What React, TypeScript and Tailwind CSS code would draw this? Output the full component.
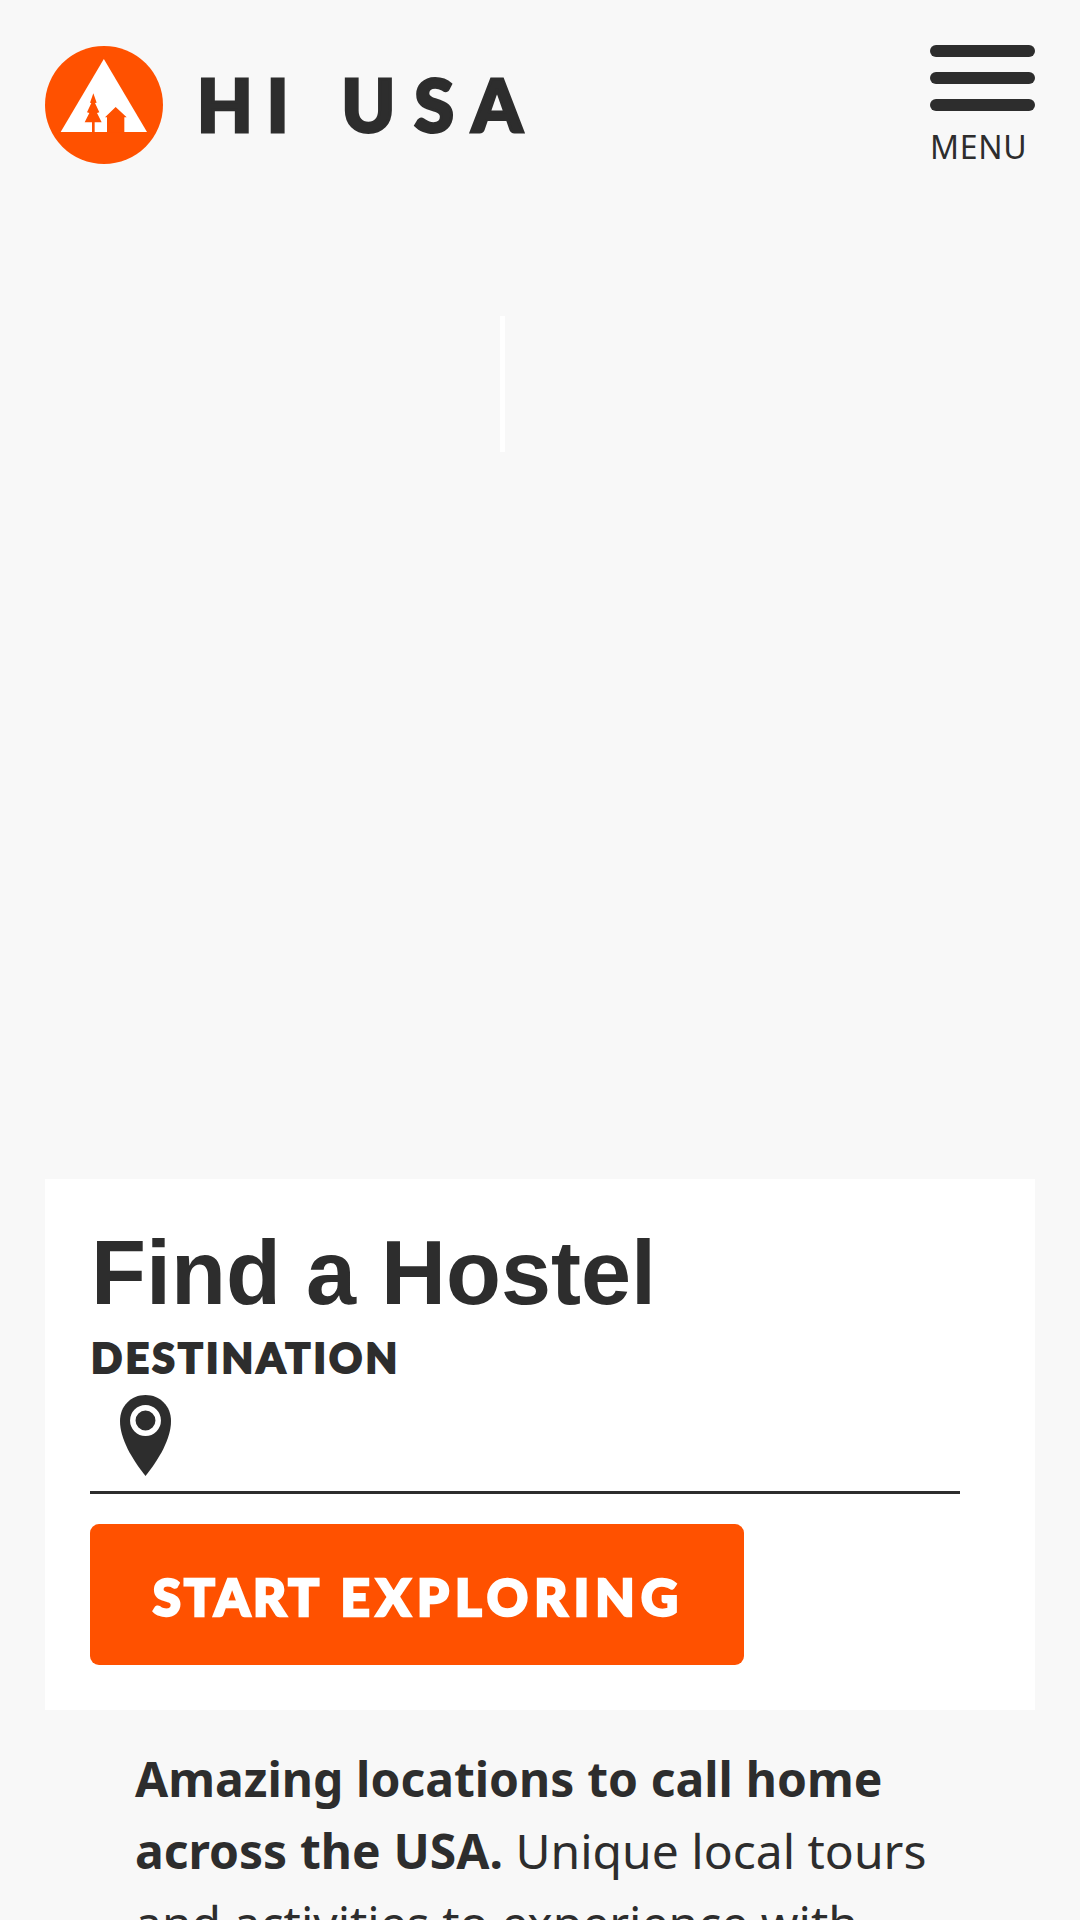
import React from 'react';

const Logo: React.FC = () => (
  <svg viewBox="45 48 354 354" className="h-[118px] w-[118px] shrink-0" aria-hidden="true">
    <circle cx="222" cy="225" r="177" fill="#ff5100" />
    <path d="M221.500 87L351 306H92Z" fill="#fff" />
    {/* Tree */}
    <path
      d="M190 190L200 218L195 219L208 247L201 249L215 277L194 277V307H186V277L164 277L178 249L171 247L184 219L180 218Z"
      fill="#ff5100"
    />
    {/* House */}
    <path d="M257 231L290 262H283V307H231V262H225Z" fill="#ff5100" />
  </svg>
);

const PinIcon: React.FC = () => (
  <svg viewBox="0 0 51 81" className="h-[81px] w-[51px]" aria-hidden="true">
    <path d="M25.500 0C11 0 0 11 0 26C0 44 12 64 25.500 81C39 64 51 44 51 26C51 11 40 0 25.500 0Z" fill="#2d2d2d" />
    <circle cx="25.500" cy="25.500" r="12.700" fill="#2d2d2d" stroke="#fff" strokeWidth="5.500" />
  </svg>
);

const Header: React.FC = () => (
  <header className="flex items-start justify-between px-[45px] pt-[45px]">
    <a href="#" className="flex items-center pt-px">
      <Logo />
      <span className="ml-[34px] pb-[2px] font-['Lato',sans-serif] text-[72px] leading-[114px] font-black tracking-[14px] [word-spacing:8px] whitespace-pre [-webkit-text-stroke:3px_#2d2d2d]">
        HI <span className="tracking-[19px]">USA</span>
      </span>
    </a>

    <button className="flex w-[105px] flex-col items-start" aria-label="Open menu">
      <span className="flex w-full flex-col gap-[15px]">
        {[0, 1, 2].map((bar) => (
          <span key={bar} className="h-3 w-full rounded-full bg-[#2d2d2d]" />
        ))}
      </span>
      <span className="mt-[14px] font-['Noto_Sans',sans-serif] text-[32px] leading-[44px] tracking-[0.700px]">MENU</span>
    </button>
  </header>
);

const HostelSearch: React.FC = () => (
  <section className="mx-[45px] h-[531px] bg-white px-[45px] pt-[45px]">
    <h1 className="pl-px font-['Liberation_Sans',sans-serif] text-[90px] leading-[99px] font-bold">Find a Hostel</h1>
    <label className="block h-[72px] pt-[5px] pl-px font-['Lato',sans-serif] text-[41px] leading-[60px] font-black tracking-[3.200px] [-webkit-text-stroke:2px_#2d2d2d]">
      DESTINATION
    </label>
    <div className="h-[99px] w-[870px] border-b-3 border-[#2d2d2d] pl-[30px]">
      <PinIcon />
    </div>
    <button className="mt-[30px] h-[141px] w-[654px] rounded-[9px] bg-[#ff5100] pt-[5px] pl-[3px] font-['Lato',sans-serif] text-[51px] font-black tracking-[3px] text-white [word-spacing:5px] [-webkit-text-stroke:2.500px_white]">
      START <span className="tracking-[6.200px]">EXPLORING</span>
    </button>
  </section>
);

export default function App() {
  return (
    <div className="flex h-screen flex-col overflow-hidden bg-[#f8f8f8] text-[#2d2d2d]">
      <Header />

      {/* Hero area */}
      <main className="flex flex-col">
        <div className="flex h-[1010px] shrink-0 px-[500px] pt-[147px]">
          <span className="h-[136px] w-[5px] bg-white" />
        </div>
        <HostelSearch />
        <p className="px-[135px] pt-[33px] font-['Noto_Sans',sans-serif] text-[48px] leading-[72px]">
          <strong className="font-bold [word-spacing:0.300px]">Amazing locations to call home across the USA.</strong>{' '}
          Unique local tours and activities to experience with
        </p>
      </main>
    </div>
  );
}
